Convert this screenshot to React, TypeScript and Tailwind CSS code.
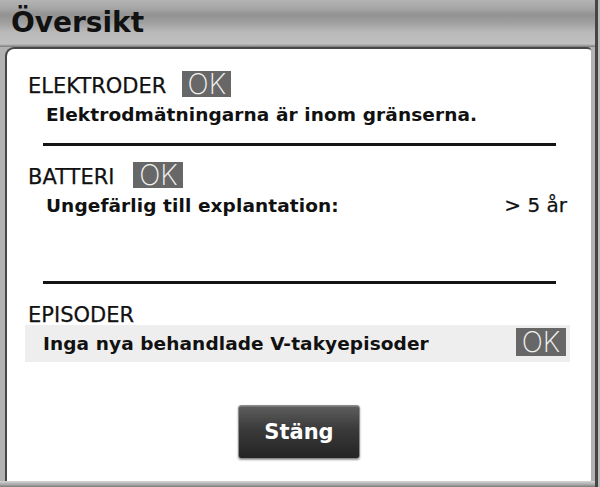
import React from 'react';

const Badge: React.FC<{ className?: string }> = ({ className = '' }) => (
  <div
    className={`flex items-center justify-center bg-[#676767] text-[#f2f2f2] text-[28px] leading-none font-extralight ${className}`}
    style={{ fontFamily: 'Inter, "Open Sans", sans-serif' }}
  >
    OK
  </div>
);

export default function App() {
  return (
    <div
      className="w-[600px] h-[487px] bg-[#bcbcbc] pr-[2px] text-[#111]"
      style={{ fontFamily: '"DejaVu Sans", Verdana, sans-serif' }}
    >
      <div className="h-full flex flex-col border-r-[3px] border-[#454545] bg-[#b2b2b2] pl-[5px] pr-[4px]">
        {/* title bar */}
        <div className="h-[47px] -ml-[5px] -mr-[4px] pl-[11px] pt-[6px] bg-[linear-gradient(to_bottom,#b4b4b4_0px,#a6a6a6_8px,#929292_15px,#a0a0a0_23px,#b9b9b9_32px,#c0c0c0_44px,#7a7a7a_47px)]">
          <h1 className="text-[28px] leading-[34px] font-bold">Översikt</h1>
        </div>

        {/* panel */}
        <div className="flex-1 flex flex-col bg-white border-l-2 border-t-2 border-[#474747] rounded-tl-[9px] rounded-tr-[4px] pl-[21px] pr-[24px] pt-[22px]">
          <div className="flex items-start h-[26px]">
            <span className="text-[21px] leading-[26px] mt-[2px] [-webkit-text-stroke:0.25px_#111]">ELEKTRODER</span>
            <Badge className="ml-[16px] w-[49px] h-[26px]" />
          </div>
          <p className="mt-[7px] pl-[18px] text-[18.5px] leading-[22px] font-bold tracking-[0.1px]">
            Elektrodmätningarna är inom gränserna.
          </p>

          <div className="mt-[17px] ml-[15px] w-[513px] h-[3px] bg-[#141414]" />

          <div className="mt-[16px] flex items-start h-[26px]">
            <span className="text-[21px] leading-[26px] mt-[2px] [-webkit-text-stroke:0.25px_#111]">BATTERI</span>
            <Badge className="ml-[19px] w-[50px] h-[26px]" />
          </div>
          <div className="mt-[6px] pl-[18px] flex justify-between items-baseline">
            <span className="text-[18.5px] leading-[22px] font-bold tracking-[0.1px]">Ungefärlig till explantation:</span>
            <span className="text-[20px] leading-[22px] [-webkit-text-stroke:0.25px_#111]">&gt; 5 år</span>
          </div>

          <div className="mt-[64px] ml-[15px] w-[513px] h-[3px] bg-[#141414]" />

          <div className="mt-[21px] text-[21px] leading-[20px] [-webkit-text-stroke:0.25px_#111]">EPISODER</div>
          <div className="-ml-[3px] w-[545px] h-[37px] bg-[#eeeeee] flex items-center justify-between pl-[18px] pr-[4px]">
            <span className="text-[18.5px] leading-[22px] font-bold tracking-[0.1px]">Inga nya behandlade V-takyepisoder</span>
            <Badge className="w-[50px] h-[28px] -mt-[3px]" />
          </div>

          <div className="mt-[43px] flex justify-center -ml-[21px] -mr-[24px]">
            <button className="w-[122px] h-[54px] rounded-[3px] border border-[#8c8c8c] bg-[linear-gradient(to_bottom,#5e5e5e,#3a3a3a_45%,#242424)] shadow-[inset_0_1px_0_#777,0_1px_2px_rgba(0,0,0,0.4)] text-white text-[21px] font-bold leading-none">
              Stäng
            </button>
          </div>
        </div>

        {/* bottom edge */}
        <div className="h-[6px] -ml-[5px] -mr-[4px] bg-[linear-gradient(to_bottom,#d6d6d6,#a8a8a8_60%,#7a7a7a)]" />
      </div>
    </div>
  );
}
